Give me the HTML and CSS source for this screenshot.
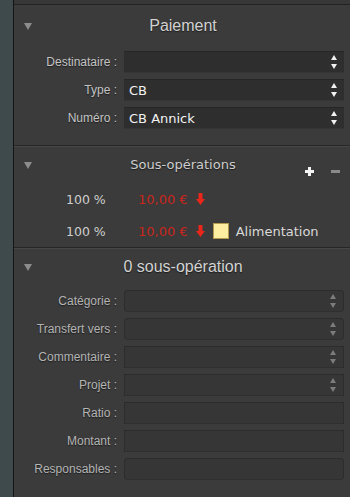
FILE: index.html
```html
<!DOCTYPE html>
<html lang="fr">
<head>
    <meta charset="UTF-8">
    <meta name="viewport" content="width=device-width, initial-scale=1.0">
    <title>Opération</title>
    <link rel="stylesheet" href="styles.css">
</head>
<body>
    <div class="app">
        <div class="strip"></div>
        <div class="panel">
            <div class="top-edge"></div>

            <!-- Paiement -->
            <section class="section section-pay">
                <div class="section-head">
                    <span class="disclosure"></span>
                    <h2>Paiement</h2>
                </div>
                <div class="fields">
                    <div class="field">
                        <label>Destinataire :</label>
                        <div class="input popup"><span></span><i class="spin"></i></div>
                    </div>
                    <div class="field">
                        <label>Type :</label>
                        <div class="input popup"><span>CB</span><i class="spin"></i></div>
                    </div>
                    <div class="field">
                        <label>Numéro :</label>
                        <div class="input popup"><span>CB Annick</span><i class="spin"></i></div>
                    </div>
                </div>
            </section>

            <!-- Sous-opérations -->
            <section class="section section-sub">
                <div class="section-head">
                    <span class="disclosure"></span>
                    <h2 class="lucida">Sous-opérations</h2>
                    <div class="head-actions">
                        <span class="btn-plus">
                            <svg width="9" height="9" viewBox="0 0 9 9"><path d="M3 0h3v3h3v3H6v3H3V6H0V3h3z" fill="#f4f4f4"/></svg>
                        </span>
                        <span class="btn-minus"></span>
                    </div>
                </div>
                <div class="sub-rows">
                    <div class="sub-row">
                        <span class="pct">100 %</span>
                        <span class="amount">10,00 €</span>
                        <svg class="arrow" width="9" height="12" viewBox="0 0 9 12"><path d="M2.5 0h4v6h2.5L4.5 12 0 6h2.5z" fill="#e8261a"/></svg>
                    </div>
                    <div class="sub-row">
                        <span class="pct">100 %</span>
                        <span class="amount">10,00 €</span>
                        <svg class="arrow" width="9" height="12" viewBox="0 0 9 12"><path d="M2.5 0h4v6h2.5L4.5 12 0 6h2.5z" fill="#e8261a"/></svg>
                        <span class="swatch"></span>
                        <span class="cat-name">Alimentation</span>
                    </div>
                </div>
            </section>

            <!-- 0 sous-opération -->
            <section class="section section-detail">
                <div class="section-head">
                    <span class="disclosure"></span>
                    <h2>0 sous-opération</h2>
                </div>
                <div class="fields">
                    <div class="field">
                        <label>Catégorie :</label>
                        <div class="input soft round"><span></span><i class="spin dim"></i></div>
                    </div>
                    <div class="field">
                        <label>Transfert vers :</label>
                        <div class="input soft round"><span></span><i class="spin dim"></i></div>
                    </div>
                    <div class="field">
                        <label>Commentaire :</label>
                        <div class="input soft"><span></span><i class="spin dim"></i></div>
                    </div>
                    <div class="field">
                        <label>Projet :</label>
                        <div class="input soft"><span></span><i class="spin dim"></i></div>
                    </div>
                    <div class="field">
                        <label>Ratio :</label>
                        <div class="input soft"><span></span></div>
                    </div>
                    <div class="field">
                        <label>Montant :</label>
                        <div class="input soft"><span></span></div>
                    </div>
                    <div class="field">
                        <label>Responsables :</label>
                        <div class="input soft round"><span></span></div>
                    </div>
                </div>
            </section>
        </div>
    </div>
</body>
</html>
```

FILE: styles.css
```css
html, body {
    margin: 0;
    padding: 0;
    height: 100%;
    background-color: #3b3b3b;
    overflow: hidden;
}
body {
    font-family: "Liberation Sans", Arial, sans-serif;
    color: #c8c8c8;
}
.app {
    display: flex;
    height: 497px;
}
.strip {
    width: 13px;
    background-color: #3e4a4b;
    border-right: 1px solid #151515;
}
.panel {
    flex: 1;
    background-color: #3b3b3b;
}
.top-edge {
    height: 4px;
    background-color: #373737;
    border-bottom: 1px solid #232323;
}
.section {
    border-bottom: 1px solid #262626;
    box-shadow: 0 1px 0 #474747;
}
.section:last-child {
    border-bottom: none;
    box-shadow: none;
}
.section-head {
    position: relative;
    display: flex;
    align-items: center;
    justify-content: center;
}
.section-head h2 {
    margin: 0;
    font-weight: normal;
    font-size: 16px;
    color: #d2d2d2;
    text-shadow: 0 1px 1px #1c1c1c;
    padding-left: 2px;
}
.section-head h2.lucida {
    font-family: "DejaVu Sans", sans-serif;
    font-size: 13px;
    color: #cdcdcd;
}
.disclosure {
    position: absolute;
    left: 10px;
    top: 50%;
    margin-top: -3px;
    width: 0;
    height: 0;
    border-left: 4.5px solid transparent;
    border-right: 4.5px solid transparent;
    border-top: 7px solid #8c8c8c;
}
.section-pay .section-head {
    height: 41px;
}
.section-pay .fields {
    padding: 5px 0 16px;
}
.fields {
    display: flex;
    flex-direction: column;
    gap: 6px;
}
.field {
    display: flex;
    align-items: center;
    height: 22px;
}
.field label {
    width: 103px;
    text-align: right;
    font-size: 12px;
    color: #c4c4c4;
    text-shadow: 0 1px 1px #1e1e1e;
}
.input {
    margin-left: 7px;
    width: 220px;
    height: 22px;
    box-sizing: border-box;
    display: flex;
    align-items: center;
    justify-content: space-between;
    padding: 0 6px 0 5px;
    background-color: #2e2e2e;
    border-top: 1px solid #262626;
    border-bottom: 1px solid #353535;
}
.input span {
    font-family: "DejaVu Sans", sans-serif;
    font-size: 13px;
    color: #f2f2f2;
}
.input.soft {
    background-color: #363636;
    border: 1px solid #2c2c2c;
    border-bottom-color: #2f2f2f;
}
.input.round {
    border-radius: 4px;
}
.spin {
    position: relative;
    width: 7px;
    height: 14px;
}
.spin::before,
.spin::after {
    content: "";
    position: absolute;
    left: 0;
    width: 0;
    height: 0;
    border-left: 3.5px solid transparent;
    border-right: 3.5px solid transparent;
}
.spin::before {
    top: 0;
    border-bottom: 5px solid #f0f0f0;
}
.spin::after {
    bottom: 0;
    border-top: 5px solid #f0f0f0;
}
.spin.dim::before {
    border-bottom-color: #7c7c7c;
}
.spin.dim::after {
    border-top-color: #7c7c7c;
}
.section-sub .section-head {
    height: 37px;
    align-items: flex-start;
    padding-top: 11px;
    box-sizing: border-box;
}
.section-sub .disclosure {
    top: 19px;
}
.head-actions {
    position: absolute;
    right: 10px;
    top: 21px;
    display: flex;
    align-items: center;
    gap: 17px;
}
.btn-plus svg {
    display: block;
}
.btn-minus {
    width: 9px;
    height: 3px;
    background-color: #8a8a8a;
}
.sub-rows {
    display: flex;
    flex-direction: column;
}
.sub-row {
    display: flex;
    align-items: center;
    height: 32px;
    font-family: "DejaVu Sans", sans-serif;
    font-size: 13px;
}
.pct {
    width: 52px;
    margin-left: 52px;
    color: #cfcfcf;
    font-size: 12.5px;
}
.amount {
    margin-left: 20px;
    color: #c9261c;
}
.arrow {
    margin-left: 8px;
}
.swatch {
    margin-left: 8px;
    width: 14px;
    height: 14px;
    background-color: #fdeea2;
    border: 1px solid #b39b4e;
}
.cat-name {
    margin-left: 7px;
    color: #d8d8d8;
}
.section-detail .section-head {
    height: 38px;
}
.section-detail .fields {
    padding-top: 4px;
}
.section-detail .field label {
    color: #b4b4b4;
}
```
